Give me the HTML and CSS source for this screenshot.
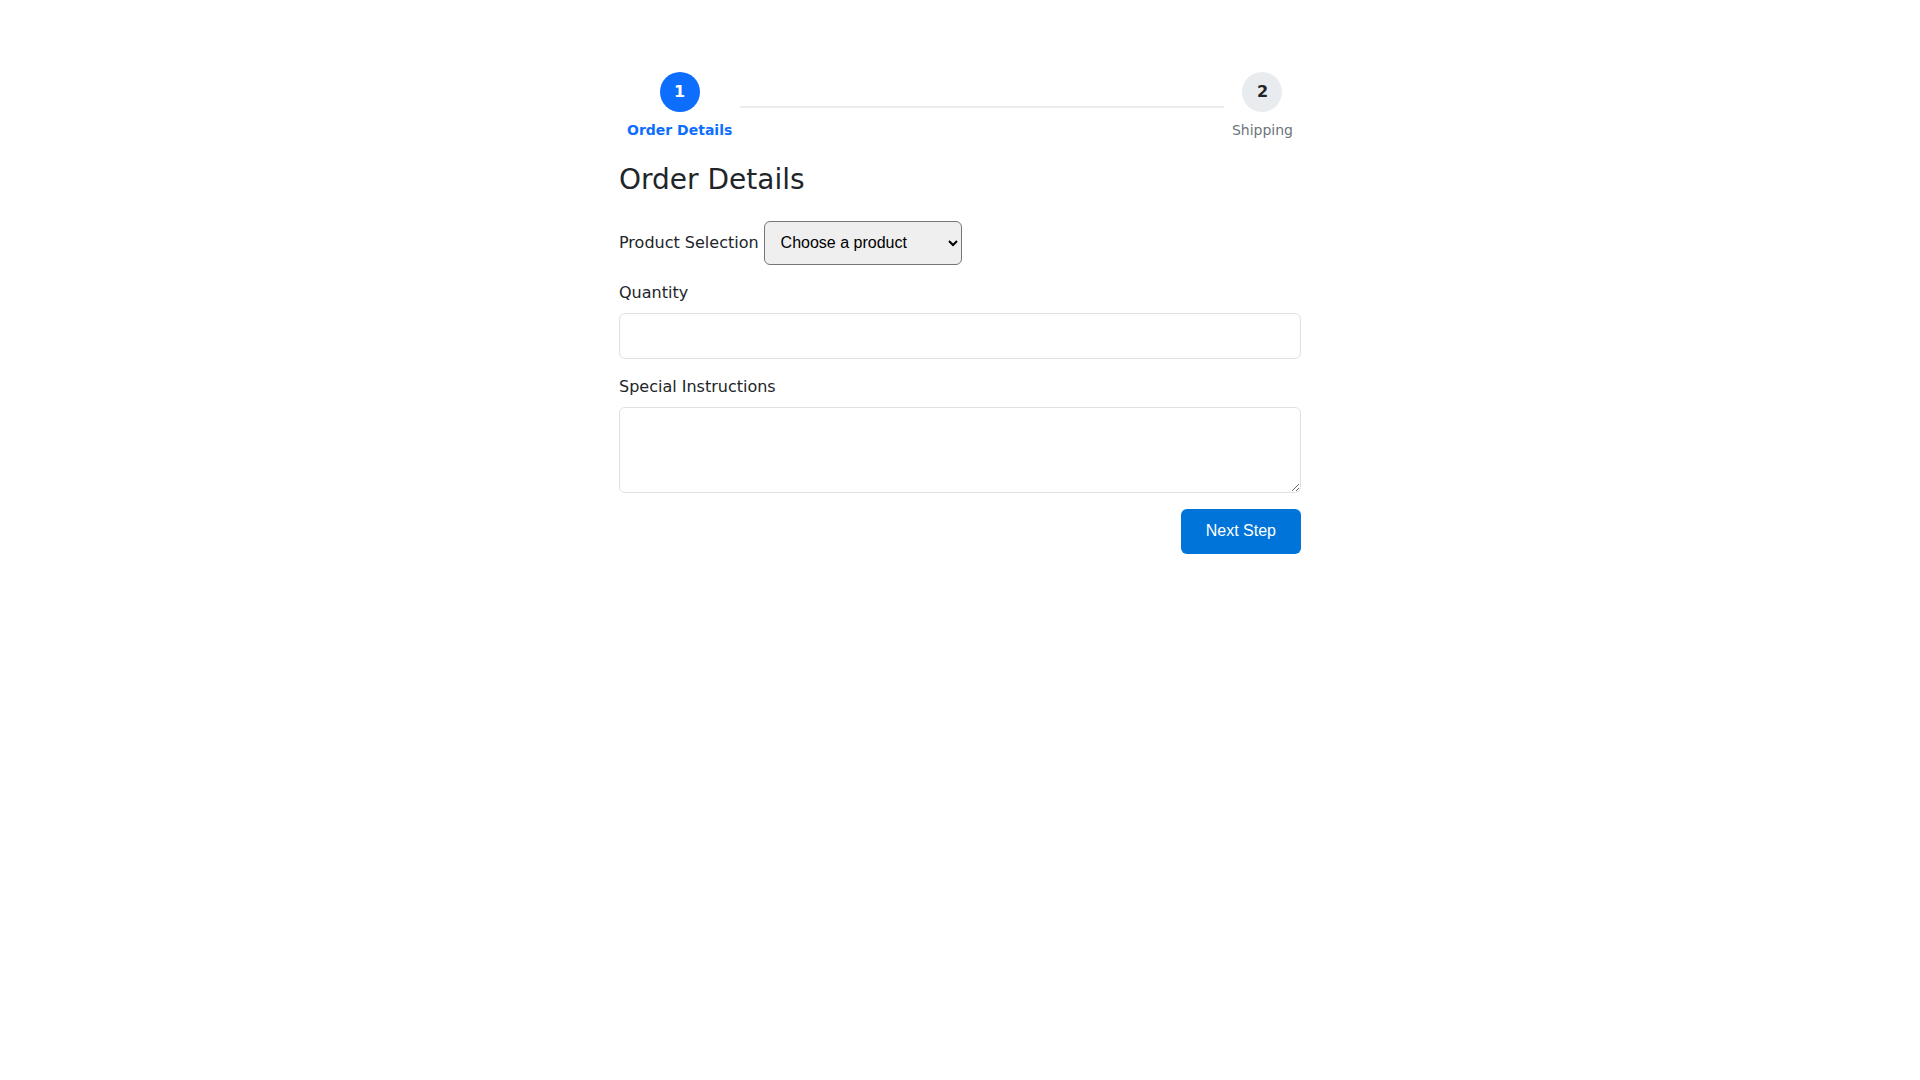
FILE: index.html
```html
<!DOCTYPE html>
<html lang="en">
<head>
<meta charset="utf-8">
<title>Order Details</title>
<link rel="stylesheet" href="styles.css">
</head>
<body>
<div class="container">
  <div class="stepper">
    <div class="step step-active">
      <div class="step-circle">1</div>
      <div class="step-label">Order Details</div>
    </div>
    <div class="step-line"></div>
    <div class="step">
      <div class="step-circle">2</div>
      <div class="step-label">Shipping</div>
    </div>
  </div>
  <h3 class="title">Order Details</h3>
  <form class="form">
    <div class="row-inline">
      <label class="label" for="product">Product Selection</label>
      <select id="product" class="select">
        <option>Choose a product</option>
        <option>Product A</option>
        <option>Product B</option>
      </select>
    </div>
    <div class="group">
      <label class="label block" for="qty">Quantity</label>
      <input id="qty" class="control" type="text">
    </div>
    <div class="group">
      <label class="label block" for="notes">Special Instructions</label>
      <textarea id="notes" class="control textarea" rows="3"></textarea>
    </div>
    <div class="actions">
      <button type="button" class="btn">Next Step</button>
    </div>
  </form>
</div>
</body>
</html>
```
FILE: styles.css
```css
html, body {
  margin: 0;
  padding: 0;
  background: #ffffff;
}
body {
  font-family: "DejaVu Sans", sans-serif;
  font-size: 16px;
  line-height: 1.5;
  color: #212529;
}
.container {
  width: 682px;
  margin: 0 auto;
  padding-top: 72px;
}
.stepper {
  display: flex;
  align-items: center;
  margin-bottom: 22px;
}
.step {
  display: flex;
  flex-direction: column;
  align-items: center;
  padding: 0 8px;
}
.step-circle {
  width: 40px;
  height: 40px;
  border-radius: 50%;
  background: #e9ecef;
  color: #212529;
  font-weight: bold;
  font-size: 16px;
  line-height: 40px;
  text-align: center;
  margin-bottom: 8px;
}
.step-label {
  font-size: 14px;
  line-height: 21px;
  color: #6c757d;
  white-space: nowrap;
}
.step-active .step-circle {
  background: #0d6efd;
  color: #ffffff;
}
.step-active .step-label {
  color: #0d6efd;
  font-weight: bold;
}
.step-line {
  flex: 1;
  height: 2px;
  background: #e9ecef;
}
.title {
  font-size: 28px;
  font-weight: 500;
  line-height: 1.2;
  margin: 0 0 24px;
}
.form {
  margin: 0;
}
.row-inline {
  display: flex;
  align-items: center;
  gap: 5px;
  margin-bottom: 16px;
}
.label {
  display: inline-block;
}
.label.block {
  display: block;
  margin-bottom: 8px;
}
.select {
  box-sizing: border-box;
  width: 198px;
  height: 44px;
  font-family: "Liberation Sans", Arial, sans-serif;
  font-size: 16px;
  padding: 0 12px;
  border: 1px solid #767676;
  border-radius: 6px;
  background-color: #efefef;
  color: #000;
}
.group {
  margin-bottom: 16px;
}
.control {
  display: block;
  box-sizing: border-box;
  width: 100%;
  font-family: "DejaVu Sans", sans-serif;
  font-size: 16px;
  line-height: 24px;
  padding: 10px 12px;
  border: 1px solid #dee2e6;
  border-radius: 6px;
  color: #212529;
  background: #fff;
  margin: 0;
}
.textarea {
  padding: 6px 12px;
  height: 86px;
}
.actions {
  display: flex;
  justify-content: flex-end;
}
.btn {
  font-family: "Liberation Sans", Arial, sans-serif;
  font-size: 16px;
  height: 45px;
  padding: 0 25px;
  border: none;
  border-radius: 6px;
  background: #0074d9;
  color: #ffffff;
}
```
